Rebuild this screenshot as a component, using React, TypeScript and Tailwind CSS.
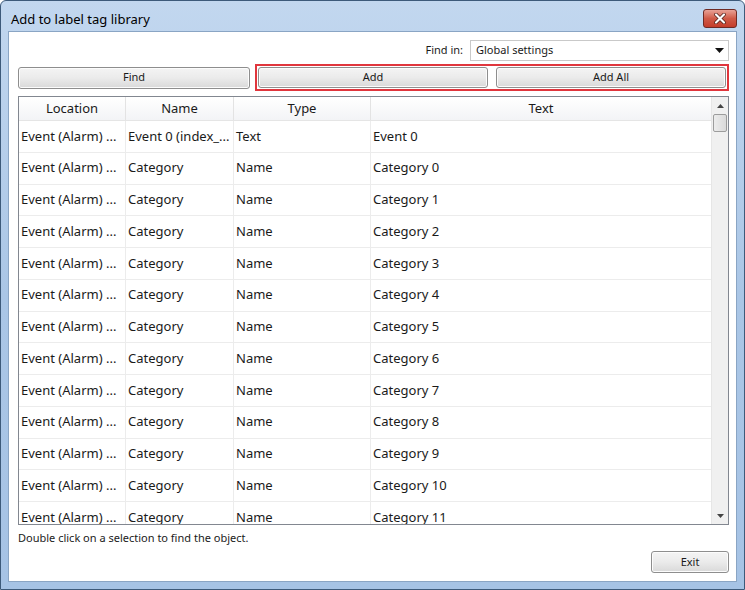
import React from "react";

const rows: [string, string, string, string][] = [
  ["Event (Alarm) ...", "Event 0 (index_...", "Text", "Event 0"],
  ...Array.from({ length: 12 }, (_, i) => ["Event (Alarm) ...", "Category", "Name", `Category ${i}`] as [string, string, string, string]),
];

function Btn({ children, className = "" }: { children: React.ReactNode; className?: string }) {
  return (
    <div
      className={
        "flex items-center justify-center rounded-[3px] border border-[#8e8e8e] bg-gradient-to-b from-[#f4f4f4] via-[#ebebeb] to-[#d9d9d9] text-[11px] text-[#1a1a1a] shadow-[inset_0_0_0_1px_#fcfcfc] " +
        className
      }
    >
      {children}
    </div>
  );
}

export default function App() {
  return (
    <div
      className="w-[745px] h-[590px] bg-gradient-to-b from-[#c2d7ef] via-[#aac6e6] to-[#a6c3e5] border border-[#3d5a7a] rounded-t-[6px] flex flex-col overflow-hidden"
      style={{ fontFamily: '"Noto Sans", "Open Sans", sans-serif' }}
    >
      {/* Title bar */}
      <div className="h-[30px] flex items-start justify-between pl-[10px] pr-[7px] shrink-0">
        <div className="text-[13px] text-black mt-[8px] leading-[20px]">Add to label tag library</div>
        <div className="mt-[8px] w-[34px] h-[19px] rounded-[3px] border border-[#6e2a24] bg-gradient-to-b from-[#e8a196] via-[#cf5a47] to-[#c43c2a] flex items-center justify-center">
          <svg width="12" height="11" viewBox="0 0 12 11">
            <path d="M2 1.5 L10 9.5 M10 1.5 L2 9.5" stroke="#4a1a14" strokeWidth="3.6" strokeLinecap="round" />
            <path d="M2 1.5 L10 9.5 M10 1.5 L2 9.5" stroke="#ffffff" strokeWidth="2.2" strokeLinecap="round" />
          </svg>
        </div>
      </div>
      {/* Client area */}
      <div className="flex-1 mx-[7px] mb-[7px] bg-white border border-[#8aa5c4] flex flex-col pl-[9px] pr-[7px]">
        {/* Find in row */}
        <div className="flex items-center justify-end mt-[8px] h-[21px] gap-[7px]">
          <span className="text-[11px] text-[#1a1a1a]">Find in:</span>
          <div className="w-[259px] h-[21px] border border-[#c9c9c9] flex items-center justify-between pl-[5px] pr-[4px]">
            <span className="text-[11px] text-[#1a1a1a]">Global settings</span>
            <svg width="9" height="5" viewBox="0 0 9 5">
              <path d="M0 0 L9 0 L4.5 5 Z" fill="#111" />
            </svg>
          </div>
        </div>
        {/* Buttons row */}
        <div className="flex items-center mt-[3px] h-[27px] gap-[5px]">
          <Btn className="w-[232px] h-[22px]">Find</Btn>
          <div className="flex-1 h-[27px] border-2 border-[#e0363d] flex items-center gap-[8px] px-[1px]">
            <Btn className="flex-1 h-[21px]">Add</Btn>
            <Btn className="flex-1 h-[21px]">Add All</Btn>
          </div>
        </div>
        {/* Table */}
        <div className="mt-[5px] h-[429px] border border-[#828790] flex overflow-hidden">
          <div className="flex-1 flex flex-col overflow-hidden">
            <div className="flex h-[24px] shrink-0 border-b border-[#e5e5e5] bg-gradient-to-b from-white to-[#f3f4f6] text-[13px] text-[#1a1a1a]">
              <div className="w-[107px] border-r border-[#e3e3e3] flex items-center justify-center">Location</div>
              <div className="w-[108px] border-r border-[#e3e3e3] flex items-center justify-center">Name</div>
              <div className="w-[137px] border-r border-[#e3e3e3] flex items-center justify-center">Type</div>
              <div className="flex-1 flex items-center justify-center">Text</div>
            </div>
            {rows.map((r, i) => (
              <div key={i} className="flex h-[31.75px] shrink-0 border-b border-[#ececec] text-[13px] text-[#1a1a1a]">
                <div className="w-[107px] border-r border-[#ececec] flex items-center pl-[2px] whitespace-nowrap overflow-hidden">{r[0]}</div>
                <div className="w-[108px] border-r border-[#ececec] flex items-center pl-[2px] whitespace-nowrap overflow-hidden">{r[1]}</div>
                <div className="w-[137px] border-r border-[#ececec] flex items-center pl-[2px] whitespace-nowrap overflow-hidden">{r[2]}</div>
                <div className="flex-1 flex items-center pl-[2px] whitespace-nowrap overflow-hidden">{r[3]}</div>
              </div>
            ))}
          </div>
          {/* Scrollbar */}
          <div className="w-[17px] bg-[#f0f0f0] border-l border-[#e6e6e6] flex flex-col shrink-0">
            <div className="h-[17px] flex items-center justify-center">
              <svg width="7" height="4" viewBox="0 0 7 4"><path d="M0 4 L7 4 L3.5 0 Z" fill="#444" /></svg>
            </div>
            <div className="h-[18px] mx-[1px] rounded-[2px] border border-[#9c9c9c] bg-gradient-to-r from-[#ececec] to-[#dadada]" />
            <div className="flex-1" />
            <div className="h-[17px] flex items-center justify-center">
              <svg width="7" height="4" viewBox="0 0 7 4"><path d="M0 0 L7 0 L3.5 4 Z" fill="#444" /></svg>
            </div>
          </div>
        </div>
        <div className="mt-[5px] text-[11px] text-[#1a1a1a] leading-[16px]">Double click on a selection to find the object.</div>
        <div className="flex justify-end mt-[5px]">
          <Btn className="w-[78px] h-[22px]">Exit</Btn>
        </div>
      </div>
    </div>
  );
}
